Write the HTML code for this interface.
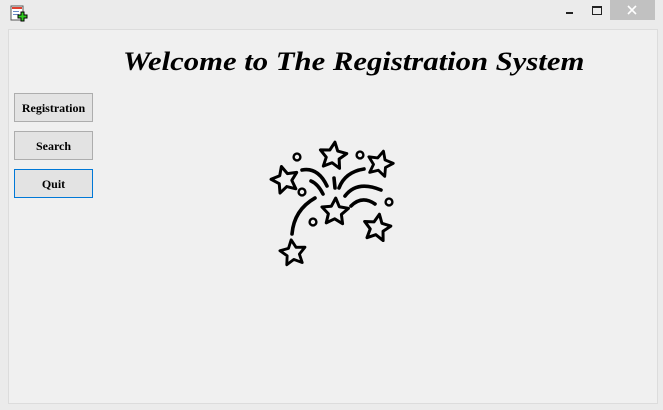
<!DOCTYPE html>
<html><head><style>
body{margin:0;width:663px;height:410px;background:#ebebeb;position:relative;overflow:hidden;font-family:"Liberation Serif",serif}
.panel{position:absolute;left:8px;top:29px;width:648px;height:373px;background:#f0f0f0;border:1px solid #dcdcdc}
.btn{position:absolute;left:14px;width:77px;height:27px;border:1px solid #adadad;background:#e3e3e3;font-weight:bold;font-size:12px;text-align:center;line-height:29px;color:#000}
h1{position:absolute;left:123px;top:47px;margin:0;font-size:26px;font-style:italic;font-weight:bold;white-space:nowrap;transform:scaleX(1.18);transform-origin:0 0}
.close{position:absolute;left:610px;top:0;width:45px;height:20px;background:#c1c1c1}
</style></head><body>
<svg style="position:absolute;left:10px;top:5px" width="18" height="18" viewBox="0 0 18 18">
<rect x="1" y="1" width="12" height="14" fill="#fff" stroke="#555" stroke-width="1"/>
<rect x="2" y="2" width="10" height="2" fill="#e04030"/>
<rect x="3" y="6" width="6" height="1" fill="#6a8ac8"/><rect x="3" y="9" width="6" height="1" fill="#6a8ac8"/>
<path d="M10 9h3v-3h3v3h3v3h-3v3h-3v-3h-3z" transform="translate(-2,1)" fill="#33cc22" stroke="#000" stroke-width="1"/>
</svg>
<div style="position:absolute;left:566px;top:12px;width:7px;height:2px;background:#222"></div>
<div style="position:absolute;left:592px;top:6px;width:8px;height:6px;border:1px solid #222;border-top-width:2px"></div>
<div class="close"><svg width="45" height="20"><path d="M18 6l8 8M26 6l-8 8" stroke="#fff" stroke-width="1.6"/></svg></div>
<div class="panel"></div>
<h1>Welcome to The Registration System</h1>
<div class="btn" style="top:93px">Registration</div>
<div class="btn" style="top:131px">Search</div>
<div class="btn" style="top:169px;border-color:#0078d7">Quit</div>
<svg style="position:absolute;left:0;top:0" width="663" height="410">
<defs><polygon id="s" points="0,-14 4,-5.5 13.3,-4.3 6.5,2.1 8.2,11.3 0,6.8 -8.2,11.3 -6.5,2.1 -13.3,-4.3 -4,-5.5" fill="none" stroke="#000" stroke-width="3" stroke-linejoin="round"/></defs>
<use href="#s" transform="translate(333,156) rotate(8)"/>
<use href="#s" transform="translate(380,164) rotate(15) scale(0.95)"/>
<use href="#s" transform="translate(285,180) rotate(-15)"/>
<use href="#s" transform="translate(335,212) rotate(3)"/>
<use href="#s" transform="translate(377,228) rotate(10)"/>
<use href="#s" transform="translate(293,253) rotate(-8) scale(0.95)"/>
<g fill="none" stroke="#000" stroke-width="2.4">
<circle cx="297" cy="157" r="3.4"/><circle cx="360" cy="155" r="3.4"/><circle cx="302" cy="192" r="3.4"/><circle cx="389" cy="202" r="3.4"/><circle cx="313" cy="222" r="3.4"/>
</g>
<g fill="none" stroke="#000" stroke-width="3.6" stroke-linecap="round">
<path d="M292,234 Q294,210 315,198"/>
<path d="M302,170 Q318,167 327,186"/>
<path d="M311,181 Q318,184 323,194"/>
<path d="M334,178 L335,188"/>
<path d="M339,188 Q345,172 364,169"/>
<path d="M345,196 Q357,180 381,190"/>
<path d="M351,206 Q362,195 375,204"/>
</g>
</svg>
</body></html>
